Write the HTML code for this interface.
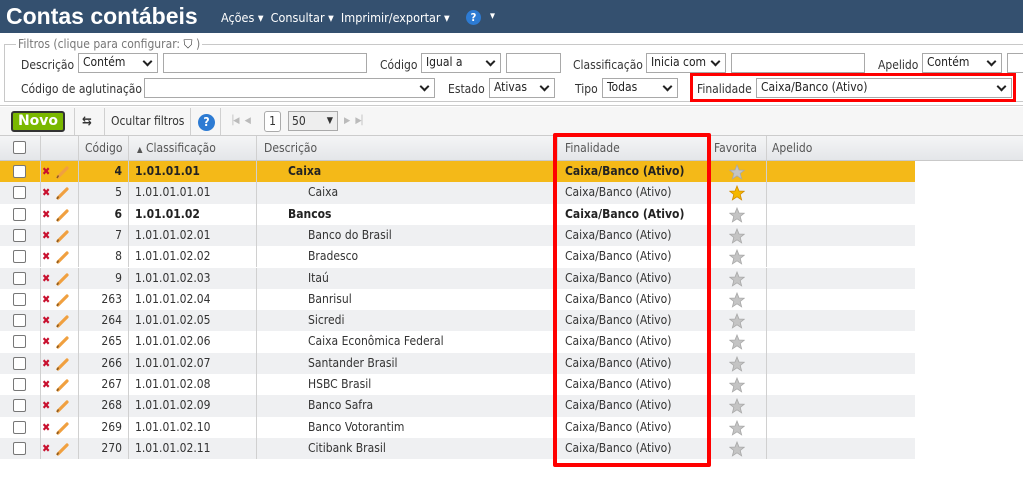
<!DOCTYPE html><html><head><meta charset="utf-8"><style>
*{box-sizing:border-box;margin:0;padding:0}
body{width:1023px;height:479px;overflow:hidden;background:#fff;font-family:"DejaVu Sans Condensed","DejaVu Sans",sans-serif;font-size:12px;color:#333;position:relative}
.a{position:absolute;white-space:nowrap}
.top{left:0;top:0;width:1023px;height:33px;background:#34506f;color:#fff}
.sel{position:absolute;height:20px;border:1px solid #a9a9a9;background:#fff;font-size:12px;padding:1px 4px;color:#222}
.sel:after{content:"";position:absolute;right:6px;top:4px;width:5px;height:5px;border-right:2px solid #222;border-bottom:2px solid #222;transform:rotate(45deg)}
.inp{position:absolute;height:20px;border:1px solid #a9a9a9;background:#fff}
.lbl{position:absolute;color:#333}
.row{position:absolute;left:0;width:915px;height:21.3px}
.row div{position:absolute;top:0;height:21.3px;line-height:21px}
.cb{width:13px;height:13px;border:1px solid #777;border-radius:2px;background:#fff;position:absolute}
.vl{position:absolute;width:1px;background:#d0d0d0}
</style></head><body>
<div class="a top"><span class="a" style="left:6px;top:3px;font:bold 23px 'Liberation Sans',sans-serif">Contas contábeis</span>
<span class="a" style="left:221px;top:10px;font-size:12.5px">Ações ▾ &nbsp;Consultar ▾ &nbsp;Imprimir/exportar ▾</span>
<span class="a" style="left:466px;top:10px;width:15px;height:15px;border-radius:50%;background:#2d7bd3;color:#fff;font-weight:bold;font-size:11px;text-align:center;line-height:15px">?</span>
<span class="a" style="left:490px;top:9px;font-size:11px">▾</span></div>
<div class="a" style="left:4px;top:44px;width:1030px;height:58px;border:1px solid #c8c8c8;border-right:none"></div>
<div class="a" style="left:16px;top:37px;background:#fff;padding:0 2px;color:#777;font-size:12px">Filtros (clique para configurar: <span style="color:#333">⛉</span> )</div>
<span class="lbl" style="left:21px;top:58px">Descrição</span><div class="sel" style="left:78px;top:53px;width:80px">Contém</div><div class="inp" style="left:163px;top:53px;width:204px"></div>
<span class="lbl" style="left:380px;top:58px">Código</span><div class="sel" style="left:421px;top:53px;width:80px">Igual a</div><div class="inp" style="left:506px;top:53px;width:55px"></div>
<span class="lbl" style="left:573px;top:58px">Classificação</span><div class="sel" style="left:646px;top:53px;width:80px">Inicia com</div><div class="inp" style="left:731px;top:53px;width:134px"></div>
<span class="lbl" style="left:878px;top:58px">Apelido</span><div class="sel" style="left:922px;top:53px;width:80px">Contém</div><div class="inp" style="left:1007px;top:53px;width:30px"></div>
<span class="lbl" style="left:21px;top:82px">Código de aglutinação</span><div class="sel" style="left:144px;top:78px;width:291px"></div>
<span class="lbl" style="left:448px;top:82px">Estado</span><div class="sel" style="left:489px;top:78px;width:66px">Ativas</div>
<span class="lbl" style="left:575px;top:82px">Tipo</span><div class="sel" style="left:602px;top:78px;width:76px">Todas</div>
<span class="lbl" style="left:697px;top:82px">Finalidade</span><div class="sel" style="left:756px;top:78px;width:256px">Caixa/Banco (Ativo)</div>
<div class="a" style="left:690px;top:73px;width:326px;height:29px;border:3px solid #f00"></div>
<div class="a" style="left:0;top:105px;width:1023px;height:1px;background:#ccc"></div>
<div class="a" style="left:0;top:107px;width:1023px;height:29px;background:#f6f6f6;border-bottom:1px solid #ccc"></div>
<div class="a" style="left:11px;top:111px;width:54px;height:21px;background:#7ab800;border:2px solid #333;border-radius:3px;color:#fff;font:bold 14px 'DejaVu Sans',sans-serif;text-align:center;line-height:17px">Novo</div>
<div class="vl" style="left:74px;top:108px;height:27px"></div>
<span class="a" style="left:82px;top:114px;font-size:13px;font-weight:bold">⇆</span>
<div class="vl" style="left:104px;top:108px;height:27px"></div>
<span class="a" style="left:111px;top:114px">Ocultar filtros</span>
<div class="vl" style="left:190px;top:108px;height:27px"></div>
<span class="a" style="left:198px;top:114px;width:17px;height:17px;border-radius:50%;background:#2d7bd3;color:#fff;font-weight:bold;font-size:12px;text-align:center;line-height:17px">?</span>
<div class="vl" style="left:220px;top:108px;height:27px"></div>
<span class="a" style="left:227px;top:116px;color:#bbb;font-size:9px">▕◀ &nbsp;◀</span>
<div class="a" style="left:264px;top:111px;width:17px;height:21px;border:1px solid #aaa;border-radius:3px;background:#fff;text-align:center;line-height:19px">1</div>
<div class="a" style="left:288px;top:111px;width:50px;height:20px;border:1px solid #aaa;background:#eee;padding-left:3px;line-height:18px">50<span style="position:absolute;right:4px;font-size:9px">▼</span></div>
<span class="a" style="left:344px;top:116px;color:#bbb;font-size:9px">▶ &nbsp;▶▏</span>
<div class="a" style="left:0;top:136px;width:1023px;height:25px;background:linear-gradient(#f4f5f6,#e4e6e9);border-bottom:1px solid #c9c9c9"></div>
<div id="hd"></div>
<div id="rows"></div>
<div class="a" style="left:553px;top:133px;width:158px;height:334px;border:4px solid #f00;border-radius:2px"></div>
<script>
var H='';
var cols=[40,78,128,256,557,708,766];
cols.forEach(function(x){H+='<div class="vl" style="left:'+x+'px;top:136px;height:24px"></div>';});
H+='<div class="cb" style="left:13px;top:141px"></div>';
H+='<span class="a" style="left:85px;top:141px;color:#555">Código</span><span class="a" style="left:137px;top:141px;color:#555"><span style="font-size:8px">▲</span> Classificação</span><span class="a" style="left:264px;top:141px;color:#555">Descrição</span><span class="a" style="left:565px;top:141px;color:#555">Finalidade</span><span class="a" style="left:714px;top:141px;color:#555">Favorita</span><span class="a" style="left:772px;top:141px;color:#555">Apelido</span>';
document.getElementById('hd').innerHTML=H;
var d=[[4,'1.01.01.01','Caixa',1],[5,'1.01.01.01.01','Caixa',0],[6,'1.01.01.02','Bancos',1],[7,'1.01.01.02.01','Banco do Brasil'],[8,'1.01.01.02.02','Bradesco'],[9,'1.01.01.02.03','Itaú'],[263,'1.01.01.02.04','Banrisul'],[264,'1.01.01.02.05','Sicredi'],[265,'1.01.01.02.06','Caixa Econômica Federal'],[266,'1.01.01.02.07','Santander Brasil'],[267,'1.01.01.02.08','HSBC Brasil'],[268,'1.01.01.02.09','Banco Safra'],[269,'1.01.01.02.10','Banco Votorantim'],[270,'1.01.01.02.11','Citibank Brasil']];
var R='';
d.forEach(function(r,i){
var top=161+i*21.3;var bg=i==0?'#f4b918':(i%2?'#eff0f2':'#fff');var b=r[3]===1?'font-weight:bold;color:#222;':'';
var desc=r[3]===1?'<div style="left:288px;'+b+'">'+r[2]+'</div>':'<div style="left:308px">'+r[2]+'</div>';
var sf=i==1?'#f5b800':'#c4c4c4', ss=i==1?'#d08a00':'#a8a8a8';
var star='<svg width="16" height="16" viewBox="0 0 16 16" style="position:absolute;left:729px;top:3px"><path d="M8 1 L10 6 L15.3 6.2 L11.2 9.5 L12.6 14.8 L8 11.8 L3.4 14.8 L4.8 9.5 L0.7 6.2 L6 6 Z" fill="'+sf+'" stroke="'+ss+'" stroke-width="0.8"/></svg>';
var pen='<svg width="16" height="16" viewBox="0 0 16 16" style="position:absolute;left:55px;top:3px"><path d="M3 13 L12 4" stroke="#f0a040" stroke-width="3.2" stroke-linecap="round"/><path d="M2 14 L3.5 11.5" stroke="#8a5a20" stroke-width="1.5"/></svg>';
R+='<div class="row" style="top:'+top+'px;background:'+bg+'">'+
'<div class="cb" style="left:13px;top:4px;height:13px"></div>'+
'<div style="left:42px;color:#c8102e;font-weight:bold;font-size:11px">✖</div>'+pen+
'<div style="left:80px;width:42px;text-align:right;'+b+'">'+r[0]+'</div>'+
'<div style="left:135px;'+b+'">'+r[1]+'</div>'+desc+
'<div style="left:565px;'+b+'">Caixa/Banco (Ativo)</div>'+star+
'</div>';
[40,78,128,256,766].forEach(function(x){R+='<div class="vl" style="left:'+x+'px;top:'+top+'px;height:21.3px"></div>';});
});
document.getElementById('rows').innerHTML=R;
</script>
</body></html>
